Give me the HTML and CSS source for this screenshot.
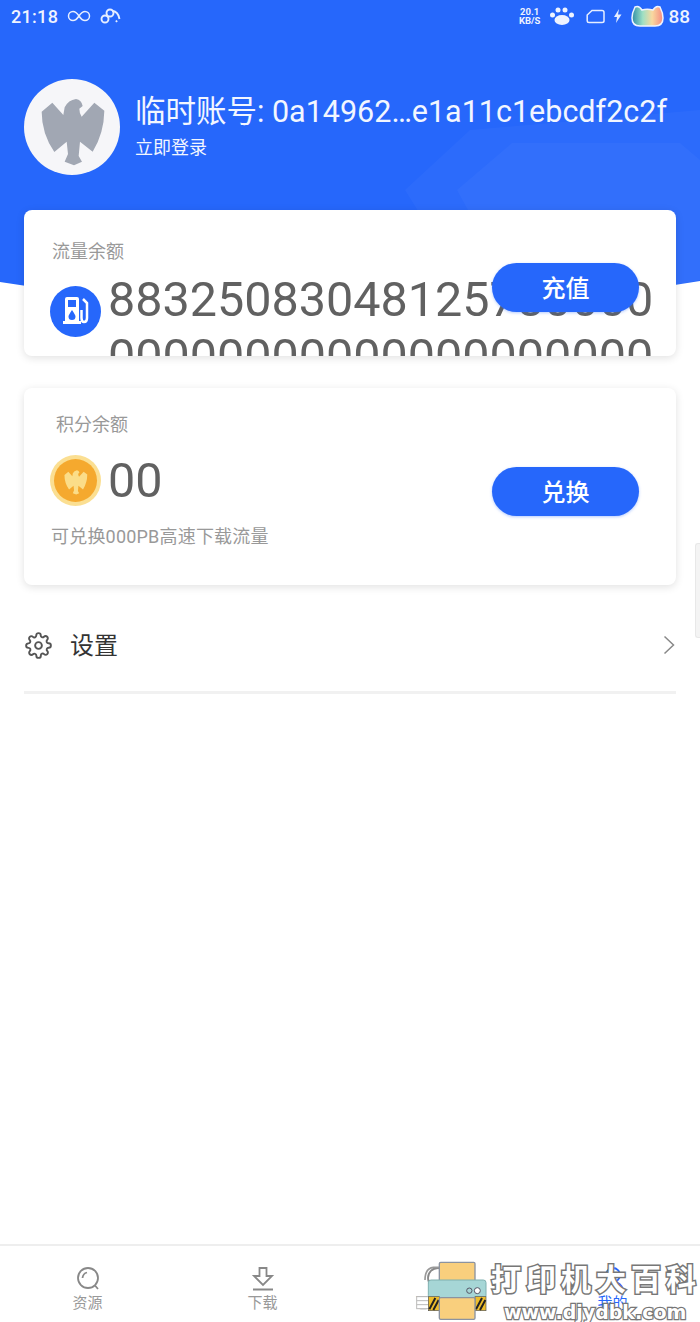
FILE: index.html
```html
<!DOCTYPE html>
<html lang="zh-CN">
<head>
<meta charset="utf-8">
<title>我的</title>
<link rel="stylesheet" href="styles.css">
</head>
<body>
<svg class="defs" width="0" height="0" aria-hidden="true">
  <symbol id="eagle" viewBox="72 237 288 288">
    <path d="M125 335 L157 308 L190 345 L194 322 Q205 300 228 297 Q245 300 248 318 L238 326 Q238 340 245 350 L283 308 L313 332 Q312 400 278 455 L240 425 L236 468 L246 485 L222 496 L194 485 L204 462 L200 425 L163 456 Q125 400 125 335Z"/>
  </symbol>
</svg>

<div class="page">
  <svg class="hero-bg" viewBox="0 0 700 320" width="700" height="320" aria-hidden="true">
    <path class="hero-fill" d="M0 0H700V281Q350 340 0 282Z"/>
    <path class="hero-deco" d="M405 190 L470 130 L700 110 V280 Q600 305 480 310Z"/>
    <path class="hero-deco" d="M457 190 L512 143 H680 L700 160 V280 Q600 300 520 305Z"/>
  </svg>

  <main class="main">
    <header class="status">
      <div class="status-left">
        <span class="time">21:18</span>
        <svg class="st-ico" width="24" height="14" viewBox="0 0 24 14"><path d="M12 7C9 2.500 7.500 2.500 6 2.500A4.500 4.500 0 0 0 6 11.500C7.500 11.500 9 11.500 12 7C15 2.500 16.500 2.500 18 2.500A4.500 4.500 0 0 1 18 11.500C16.500 11.500 15 11.500 12 7Z"/></svg>
        <svg class="st-ico link" width="21" height="16" viewBox="0 0 21 16"><circle cx="5" cy="11" r="3.500"/><circle cx="10" cy="5" r="3.500"/><path d="M12 3Q18 3 19.500 11M16 12.500L17 14"/></svg>
      </div>
      <div class="status-right">
        <span class="speed">20.1<br>KB/S</span>
        <svg class="paw" width="26" height="20" viewBox="0 0 26 20"><circle cx="3.500" cy="9" r="2.500"/><circle cx="9" cy="4" r="2.500"/><circle cx="16" cy="4" r="2.500"/><circle cx="22.500" cy="9" r="2.500"/><ellipse cx="13" cy="14" rx="7.500" ry="5"/></svg>
        <svg class="st-ico sim" width="19" height="15" viewBox="0 0 19 15"><path d="M6 1.500H16Q18 1.500 18 3.500V12Q18 13.500 16 13.500H3Q1.200 13.500 1.200 12V6Z"/></svg>
        <svg class="bolt" width="9" height="14" viewBox="0 0 9 14"><path d="M6 0L1 8H4L3 14L8.500 5.500H5Z"/></svg>
        <svg class="cat" width="33" height="22" viewBox="0 0 33 22">
          <defs><linearGradient id="catg"><stop offset="0" stop-color="#2f8fa8"/><stop offset=".35" stop-color="#9fe0c4"/><stop offset=".65" stop-color="#f9d9a0"/><stop offset="1" stop-color="#f58a80"/></linearGradient></defs>
          <path class="cat-body" d="M4 2Q8 0 11 5Q16 3.500 22 5Q25 0 29 2Q32 8 32 13Q32 21 24 21H9Q1 21 1 13Q1 8 4 2Z"/>
        </svg>
        <span class="battery">88</span>
      </div>
    </header>

    <section class="profile">
      <div class="avatar"><svg width="96" height="96"><use href="#eagle"/></svg></div>
      <div class="profile-text">
        <div class="account">临时账号: 0a14962…e1a11c1ebcdf2c2f</div>
        <div class="login">立即登录</div>
      </div>
    </section>

    <section class="card card-flow">
      <div class="card-title">流量余额</div>
      <div class="balance-row">
        <svg class="round-ico" width="51" height="51" viewBox="0 0 51 51">
          <circle class="fuel-bg" cx="25.500" cy="25.500" r="25.500"/>
          <path class="fuel" fill-rule="evenodd" d="M15 13Q15 11 17 11H27Q29 11 29 13V35H31V38H13V35H15ZM18 14V21H26V14ZM22 24Q18.500 29 18.500 30.500A3.500 3.500 0 0 0 25.500 30.500Q25.500 29 22 24Z"/>
          <path class="fuel-line" d="M33 13L37 17V32Q37 36 34 36Q31.500 36 31.500 32V24"/>
        </svg>
        <div class="amount amount-long">88325083048125780000000000000000000000000000</div>
      </div>
      <button class="pill pill-over">充值</button>
    </section>

    <section class="card card-points">
      <div class="points-body">
        <div class="card-title title-indent">积分余额</div>
        <div class="balance-row points-row">
          <svg class="round-ico" width="51" height="51" viewBox="0 0 51 51">
            <circle class="coin-out" cx="25.500" cy="25.500" r="25.500"/>
            <circle class="coin-in" cx="25.500" cy="25.500" r="21.500"/>
            <use class="coin-eagle" href="#eagle" x="8" y="8" width="35" height="35"/>
          </svg>
          <div class="amount">00</div>
        </div>
        <div class="hint">可兑换000PB高速下载流量</div>
      </div>
      <button class="pill">兑换</button>
    </section>

    <section class="settings">
      <svg class="gear" width="27" height="27" viewBox="0 0 24 24"><circle cx="12" cy="12" r="3"/><path d="M19.400 15a1.650 1.650 0 0 0 .33 1.820l.06.06a2 2 0 0 1 0 2.830 2 2 0 0 1-2.830 0l-.06-.06a1.650 1.650 0 0 0-1.820-.33 1.650 1.650 0 0 0-1 1.510V21a2 2 0 0 1-2 2 2 2 0 0 1-2-2v-.09A1.650 1.650 0 0 0 9 19.400a1.650 1.650 0 0 0-1.820.33l-.06.06a2 2 0 0 1-2.830 0 2 2 0 0 1 0-2.830l.06-.06a1.650 1.650 0 0 0 .33-1.820 1.650 1.650 0 0 0-1.510-1H3a2 2 0 0 1-2-2 2 2 0 0 1 2-2h.09A1.650 1.650 0 0 0 4.600 9a1.650 1.650 0 0 0-.33-1.820l-.06-.06a2 2 0 0 1 0-2.830 2 2 0 0 1 2.830 0l.06.06a1.650 1.650 0 0 0 1.820.33H9a1.650 1.650 0 0 0 1-1.510V3a2 2 0 0 1 2-2 2 2 0 0 1 2 2v.09a1.650 1.650 0 0 0 1 1.510 1.650 1.650 0 0 0 1.820-.33l.06-.06a2 2 0 0 1 2.830 0 2 2 0 0 1 0 2.830l-.06.06a1.650 1.650 0 0 0-.33 1.820V9a1.650 1.650 0 0 0 1.510 1H21a2 2 0 0 1 2 2 2 2 0 0 1-2 2h-.09a1.650 1.650 0 0 0-1.510 1z"/></svg>
      <span class="settings-label">设置</span>
      <svg class="chevron" width="12" height="20" viewBox="0 0 12 20"><path d="M1.500 1.500L10.500 10L1.500 18.500"/></svg>
    </section>
  </main>

  <nav class="tabs">
    <div class="tab">
      <svg class="tab-ico" width="26" height="26" viewBox="0 0 26 26"><circle cx="13" cy="12" r="10"/><path d="M7.500 12Q8 7.500 12 6.500M20 19.500L23 23"/></svg>
      <span>资源</span>
    </div>
    <div class="tab">
      <svg class="tab-ico" width="26" height="26" viewBox="0 0 26 26"><path d="M9.500 2H16.500V10H22L13 19L4 10H9.500ZM3 23.500H23"/></svg>
      <span>下载</span>
    </div>
    <div class="tab">
      <svg class="tab-ico" width="26" height="26" viewBox="0 0 26 26"><circle cx="13" cy="12" r="10"/></svg>
      <span>已下载</span>
    </div>
    <div class="tab tab-active">
      <svg class="tab-ico" width="26" height="26" viewBox="0 0 26 26"><circle cx="13" cy="9" r="7"/><path d="M3 24Q5 16 13 16Q21 16 23 24"/></svg>
      <span>我的</span>
    </div>
  </nav>

  <div class="scrollbar"></div>

  <div class="watermark">
    <svg class="printer" width="72" height="64" viewBox="48 84 216 192">
      <path class="pr-arc" d="M118 112H100Q75 115 75 150"/>
      <rect class="pr-tray" x="50" y="200" width="36" height="36"/>
      <path class="pr-tray" d="M50 212H86M50 224H86"/>
      <rect class="pr-paper" x="118" y="97" width="107" height="60" rx="4"/>
      <rect class="pr-body" x="85" y="150" width="173" height="55" rx="8"/>
      <rect class="pr-hazard" x="85" y="200" width="33" height="42"/>
      <rect class="pr-hazard" x="225" y="200" width="33" height="42"/>
      <path class="pr-stripe" d="M88 238L106 204M100 240L116 210M228 238L246 204M240 240L256 210"/>
      <rect class="pr-paper" x="118" y="203" width="107" height="65" rx="4"/>
      <circle class="pr-dot" cx="208" cy="182" r="8"/>
      <circle class="pr-dot pr-dot-w" cx="232" cy="182" r="9"/>
    </svg>
    <div class="wm-text">
      <div class="wm-cn">打印机大百科</div>
      <div class="wm-en">www.djydbk.com</div>
    </div>
  </div>
</div>
</body>
</html>
```

FILE: styles.css
```css
* { box-sizing: border-box; }
html, body { margin: 0; padding: 0; }
body {
  width: 700px;
  height: 1322px;
  overflow: hidden;
  background: #fff;
  font-family: Roboto, "Noto Sans CJK SC", sans-serif;
  color: #333;
}
.defs { position: absolute; }
.page {
  position: relative;
  width: 700px;
  height: 1322px;
  display: flex;
  flex-direction: column;
  overflow: hidden;
}
.hero-bg { position: absolute; left: 0; top: 0; }
.hero-fill { fill: #2667fb; }
.hero-deco { fill: #fff; opacity: .03; }

.main {
  position: relative;
  flex: 1;
  display: flex;
  flex-direction: column;
  padding: 0 24px;
}

/* status bar */
.status {
  height: 32px;
  margin: 0 -24px;
  padding: 0 10px 0 11px;
  display: flex;
  align-items: center;
  justify-content: space-between;
  color: #eef3ff;
}
.status-left, .status-right { display: flex; align-items: center; }
.status-left { gap: 9px; }
.time { font-size: 18px; font-weight: 500; letter-spacing: .3px; }
.st-ico { fill: none; stroke: #e6eeff; stroke-width: 1.500; }
.link { stroke-width: 1.900; }
.speed {
  font-size: 9.500px;
  line-height: 9px;
  font-weight: 700;
  text-align: center;
  margin-right: 9px;
}
.paw { fill: #eef3ff; margin-right: 11px; }
.sim { margin-right: 8px; }
.bolt { fill: #e6eeff; margin-right: 9px; }
.cat { margin-right: 4px; }
.cat-body { fill: url(#catg); stroke: #eef3ff; stroke-width: 1.500; }
.battery { font-size: 19px; font-weight: 500; }

/* profile */
.profile {
  display: flex;
  align-items: center;
  gap: 15px;
  margin-top: 47px;
  height: 96px;
  color: #f2f6ff;
}
.avatar {
  width: 96px;
  height: 96px;
  flex: none;
  border-radius: 50%;
  background: #f6f6f9;
  fill: #a1a7b3;
}
.avatar svg { display: block; }
.profile-text { white-space: nowrap; padding-top: 3px; }
.account { font-size: 30.500px; line-height: 36px; }
.login { font-size: 18px; line-height: 30px; margin-top: 3px; }

/* cards */
.card {
  position: relative;
  background: #fff;
  border-radius: 8px;
  box-shadow: 0 2px 8px rgba(0, 0, 0, .12);
}
.card-flow {
  margin-top: 35px;
  height: 146px;
  padding: 29px 24px 0 28px;
  overflow: hidden;
}
.card-flow .card-title { line-height: 26px; }
.card-flow .balance-row { margin-left: -2px; }
.card-title { font-size: 18px; color: #999; }
.title-indent { margin-left: 4px; line-height: 26px; }
.balance-row { display: flex; align-items: flex-start; gap: 7px; margin-top: 6px; }
.round-ico { flex: none; margin-top: 15px; }
.fuel-bg { fill: #2667fb; }
.fuel { fill: #fff; }
.fuel-line { fill: none; stroke: #fff; stroke-width: 2.500; }
.coin-out { fill: #fbdf92; }
.coin-in { fill: #f5a92e; }
.coin-eagle { fill: #fbdd88; }
.amount {
  font-size: 48.500px;
  color: #616161;
  word-break: break-all;
  flex: none;
  width: 550px;
  margin-top: 0;
  line-height: 57px;
}
.pill {
  width: 147px;
  height: 49px;
  border: 0;
  border-radius: 25px;
  background: #2667fb;
  color: #fff;
  font-family: inherit;
  font-size: 24px;
  font-weight: 500;
  padding: 0 0 3px;
  flex: none;
  box-shadow: 0 1px 3px rgba(38, 103, 251, .35);
}
.pill-over { position: absolute; left: 468px; top: 53px; }

.card-points {
  margin-top: 32px;
  height: 197px;
  padding: 24px 37px 0 28px;
  display: flex;
  justify-content: space-between;
  align-items: flex-start;
}
.points-row { margin-top: 11px; margin-left: -2px; }
.points-row .round-ico { margin-top: 6px; }
.points-row .amount { width: auto; margin-top: 3px; }
.card-points .pill { margin-top: 55px; }
.hint { font-size: 18px; line-height: 26px; letter-spacing: .2px; color: #999; margin: 15px 0 0 -1px; }

/* settings row */
.settings {
  display: flex;
  align-items: center;
  height: 109px;
  padding-top: 14px;
  border-bottom: 3px solid #f1f1f1;
}
.gear {
  fill: none;
  stroke: #555;
  stroke-width: 1.700;
  flex: none;
  margin-left: 1px;
}
.settings-label { font-size: 24px; margin-left: 18px; padding-bottom: 4px; color: #333; flex: 1; }
.chevron { fill: none; stroke: #888; stroke-width: 1.500; margin-right: 1px; }

/* tabs */
.tabs {
  position: relative;
  height: 78px;
  border-top: 2px solid #eee;
  display: grid;
  grid-template-columns: repeat(4, 1fr);
  background: #fff;
}
.tab {
  display: flex;
  flex-direction: column;
  align-items: center;
  padding-top: 20px;
  font-size: 15px;
  line-height: 20px;
  color: #999;
}
.tab-ico { fill: none; stroke: #888; stroke-width: 1.800; margin-bottom: 1px; }
.tab-active { color: #2667fb; }
.tab-active .tab-ico { stroke: #2667fb; }

.scrollbar {
  position: absolute;
  right: 0;
  top: 543px;
  width: 5px;
  height: 95px;
  border-radius: 3px 0 0 3px;
  background: #f4f4f4;
  border: 1px solid #e8e8e8;
  border-right: 0;
}

/* watermark over the tab bar */
.watermark {
  position: absolute;
  left: 416px;
  top: 1258px;
  display: flex;
  width: 284px;
  height: 64px;
}
.printer { flex: none; }
.pr-arc { fill: none; stroke: #999; stroke-width: 5; }
.pr-tray { fill: #fff; stroke: #bbb; stroke-width: 3; }
.pr-paper { fill: #f9cf7d; stroke: #8b93a0; stroke-width: 4; }
.pr-body { fill: #a6d6d6; stroke: #7fb0b0; stroke-width: 3; }
.pr-hazard { fill: #eebd2c; stroke: #555; stroke-width: 2; }
.pr-stripe { fill: none; stroke: #222; stroke-width: 6; }
.pr-dot { fill: #a6d6d6; stroke: #556; stroke-width: 3; }
.pr-dot-w { fill: #fff; }
.wm-text { margin-left: 3px; white-space: nowrap; }
.wm-cn {
  font-size: 30px;
  line-height: 44px;
  letter-spacing: 5px;
  font-weight: 700;
  color: #fff;
  -webkit-text-stroke: 3px #777;
  paint-order: stroke fill;
}
.wm-en {
  font-size: 19px;
  line-height: 20px;
  margin-left: 13px;
  font-weight: 700;
  font-family: "DejaVu Sans", sans-serif;
  color: #fff;
  -webkit-text-stroke: 2.500px #777;
  paint-order: stroke fill;
}
```
